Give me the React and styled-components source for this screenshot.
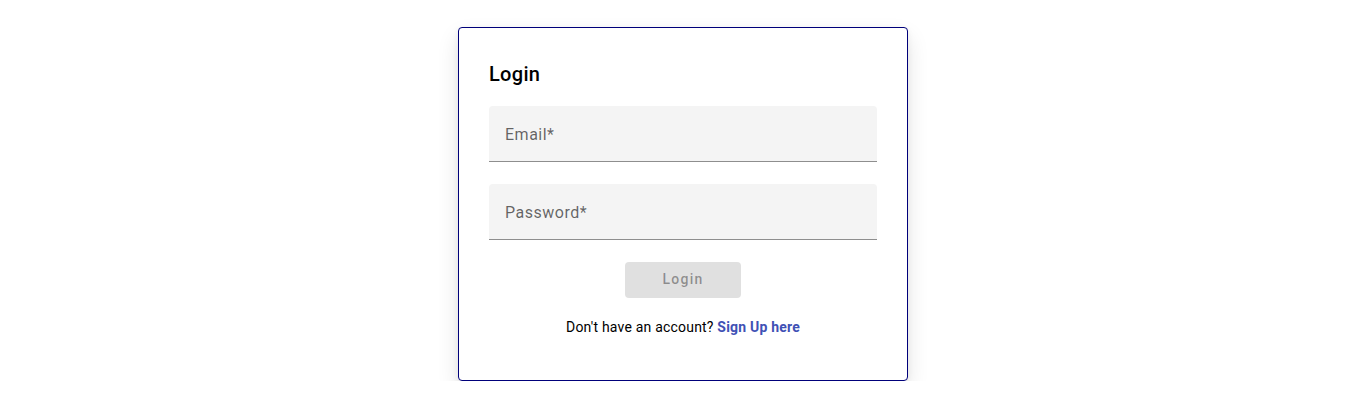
import React from 'react';
import styled, { createGlobalStyle } from 'styled-components';

const GlobalStyle = createGlobalStyle`
  body {
    margin: 0;
    background: #fff;
    font-family: Roboto, "Helvetica Neue", Arial, sans-serif;
  }
`;

const Page = styled.div`
  display: flex;
  justify-content: center;
  padding-top: 27px;
`;

const Card = styled.div`
  width: 388px;
  padding: 30px 30px 43px;
  border: 1px solid #00007a;
  border-radius: 4px;
  background: #fff;
  box-shadow: 0 10px 22px rgba(0, 0, 0, 0.11), 0 2px 6px rgba(0, 0, 0, 0.06);
  display: flex;
  flex-direction: column;
`;

const Title = styled.h2`
  margin: 0 0 16px;
  font-size: 20px;
  font-weight: 500;
  line-height: 32px;
  letter-spacing: 0.3px;
  color: #000;
`;

const Field = styled.div`
  background: #f4f4f4;
  border-radius: 4px 4px 0 0;
  border-bottom: 1px solid rgba(0, 0, 0, 0.42);
  display: flex;
  align-items: center;
  padding: 1px 16px 0;
  box-sizing: border-box;
  height: 56px;
  margin-bottom: ${p => p.$gap || 0}px;
`;

const Label = styled.span`
  font-size: 16px;
  letter-spacing: 0.5px;
  color: rgba(0, 0, 0, 0.6);
`;

const Button = styled.button`
  align-self: center;
  width: 116px;
  height: 36px;
  padding: 0 0 2px;
  border: none;
  border-radius: 4px;
  background: #e0e0e0;
  color: rgba(0, 0, 0, 0.38);
  font-family: Roboto, Arial, sans-serif;
  font-size: 14px;
  font-weight: 500;
  letter-spacing: 1.25px;
  margin-top: 22px;
`;

const Footer = styled.p`
  margin: 19px 0 0;
  text-align: center;
  font-size: 14px;
  line-height: 20px;
  letter-spacing: 0.2px;
  color: #000;
`;

const Link = styled.a`
  color: #3f51b5;
  font-weight: 700;
  text-decoration: none;
`;

export default function App() {
  return (
    <>
      <GlobalStyle />
      <Page>
        <Card>
          <Title>Login</Title>
          <Field $gap={22}><Label>Email*</Label></Field>
          <Field><Label>Password*</Label></Field>
          <Button disabled>Login</Button>
          <Footer>
            Don't have an account? <Link href="#">Sign Up here</Link>
          </Footer>
        </Card>
      </Page>
    </>
  );
}
